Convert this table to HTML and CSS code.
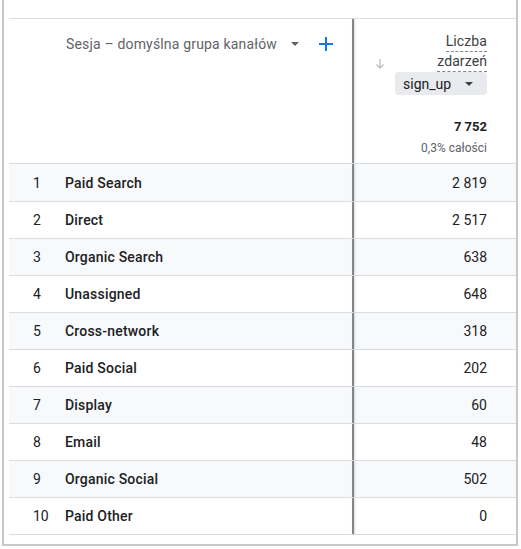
FILE: index.html
```html
<!DOCTYPE html>
<html lang="pl">
<head>
<meta charset="utf-8">
<link rel="stylesheet" href="styles.css">
</head>
<body>
<div class="frame">
  <div class="table">
    <div class="head">
      <div class="hleft">
        <span class="dimname">Sesja – domyślna grupa kanałów</span>
        <svg class="caret" width="10" height="10" viewBox="0 0 10 10"><path d="M1 3h8L5 7z" fill="#5f6368"/></svg>
        <svg class="plus" width="14" height="14" viewBox="0 0 14 14"><path d="M7 0v14M0 7h14" stroke="#1a73e8" stroke-width="2"/></svg>
      </div>
      <div class="divider"></div>
      <div class="hright">
        <div class="mtitle">
          <svg class="sort" width="10" height="12" viewBox="0 0 10 12"><path d="M5 1v9M1.5 6.5L5 10l3.5-3.5" stroke="#bdc1c6" stroke-width="1.4" fill="none"/></svg>
          <div class="mcol">
            <div class="mlabel"><span class="dash">Liczba</span><span class="dash">zdarzeń</span></div>
            <div class="chip">sign_up <svg width="10" height="10" viewBox="0 0 10 10"><path d="M1 3h8L5 7z" fill="#3c4043"/></svg></div>
          </div>
        </div>
        <div class="total">7 752</div>
        <div class="pct">0,3% całości</div>
      </div>
    </div>
    <div class="row alt"><div class="left"><span class="idx">1</span><span class="name">Paid Search</span></div><div class="divider"></div><div class="val">2 819</div></div>
    <div class="row"><div class="left"><span class="idx">2</span><span class="name">Direct</span></div><div class="divider"></div><div class="val">2 517</div></div>
    <div class="row alt"><div class="left"><span class="idx">3</span><span class="name">Organic Search</span></div><div class="divider"></div><div class="val">638</div></div>
    <div class="row"><div class="left"><span class="idx">4</span><span class="name">Unassigned</span></div><div class="divider"></div><div class="val">648</div></div>
    <div class="row alt"><div class="left"><span class="idx">5</span><span class="name">Cross-network</span></div><div class="divider"></div><div class="val">318</div></div>
    <div class="row"><div class="left"><span class="idx">6</span><span class="name">Paid Social</span></div><div class="divider"></div><div class="val">202</div></div>
    <div class="row alt"><div class="left"><span class="idx">7</span><span class="name">Display</span></div><div class="divider"></div><div class="val">60</div></div>
    <div class="row"><div class="left"><span class="idx">8</span><span class="name">Email</span></div><div class="divider"></div><div class="val">48</div></div>
    <div class="row alt"><div class="left"><span class="idx">9</span><span class="name">Organic Social</span></div><div class="divider"></div><div class="val">502</div></div>
    <div class="row"><div class="left"><span class="idx">10</span><span class="name">Paid Other</span></div><div class="divider"></div><div class="val">0</div></div>
  </div>
</div>
</body>
</html>
```
FILE: styles.css
```css
* { box-sizing: border-box; }
html, body { margin: 0; padding: 0; background: #fff; }
body { font-family: Roboto, "Noto Sans", sans-serif; color: #202124; font-size: 14px; }
.frame {
  margin-left: 2px;
  width: 516px;
  height: 546px;
  border-left: 2px solid #c8c8c8;
  border-right: 2px solid #c8c8c8;
  border-bottom: 2px solid #c8c8c8;
  padding: 18px 0 0 5px;
}
.table { border-top: 1px solid #dadce0; border-bottom: 1px solid #dadce0; }
.head { display: flex; height: 145px; border-bottom: 1px solid #dadce0; }
.divider { width: 2px; flex: none; background: #80868b; box-shadow: 1px 0 2px rgba(0,0,0,0.15); }
.hleft { width: 343px; display: flex; align-items: flex-start; padding: 16px 0 0 57px; color: #5f6368; font-size: 14px; }
.dimname { line-height: 18px; letter-spacing: 0.17px; }
.caret { margin: 4px 0 0 13px; }
.plus { margin: 2px 0 0 19px; }
.hright { flex: 1; display: flex; flex-direction: column; align-items: flex-end; padding: 12px 29px 0 0; }
.mtitle { display: flex; align-items: flex-start; }
.sort { margin: 27px 10px 0 0; }
.mcol { display: flex; flex-direction: column; align-items: flex-end; }
.mlabel { display: flex; flex-direction: column; align-items: flex-end; color: #3c4043; font-size: 14px; letter-spacing: 0.1px; }
.dash { border-bottom: 1px dashed #80868b; line-height: 20px; height: 21px; }
.dash + .dash { height: 20px; line-height: 19px; }
.chip { margin-top: 0; width: 92px; height: 23px; background: #e8eaed; border-radius: 4px; display: flex; align-items: center; padding-left: 8px; gap: 13px; font-size: 14px; color: #202124; }
.total { margin-top: 22px; font-weight: 700; font-size: 13px; color: #202124; line-height: 20px; }
.pct { margin-top: 3px; font-size: 12px; color: #5f6368; line-height: 16px; }
.row { display: flex; height: 37px; border-top: 1px solid #dadce0; }
.row:nth-of-type(2) { border-top: none; }
.row.alt { background: #f8f9fa; }
.left { width: 343px; display: flex; align-items: center; }
.idx { width: 56px; padding-left: 24px; }
.name { font-weight: 500; letter-spacing: 0.2px; }
.val { flex: 1; display: flex; align-items: center; justify-content: flex-end; padding-right: 29px; }
```
